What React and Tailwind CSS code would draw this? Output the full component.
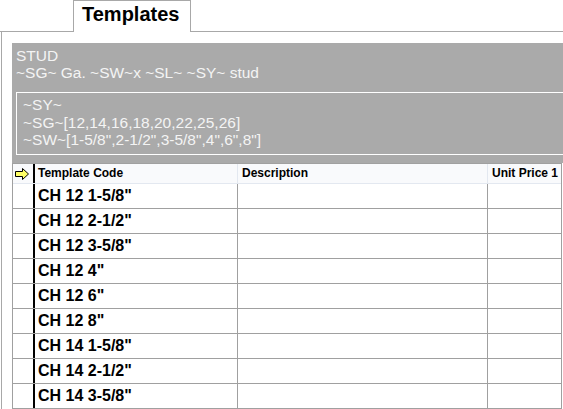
import React from 'react';

const rows = [
    'CH 12 1-5/8"',
    'CH 12 2-1/2"',
    'CH 12 3-5/8"',
    'CH 12 4"',
    'CH 12 6"',
    'CH 12 8"',
    'CH 14 1-5/8"',
    'CH 14 2-1/2"',
    'CH 14 3-5/8"',
];

// Yellow "current row" arrow in the header selector cell
const RowArrow = () => (
    <svg width="14" height="12" viewBox="0 0 14 12">
        <polygon
            points="0.5,3.5 7.5,3.5 7.5,0.5 13.5,6 7.5,11.5 7.5,8.5 0.5,8.5"
            fill="#ffff66"
            stroke="#000"
            strokeWidth="1"
        />
    </svg>
);

const App = () => {
    return (
        <div className="w-[563px] h-[409px] overflow-hidden bg-white font-['Liberation_Sans',Arial,sans-serif]">
            {/* Tab strip */}
            <div className="flex h-[32px]">
                <div className="w-[73px] border-b border-[#a8a8a8]" />
                <div className="w-[118px] h-[32px] border-t border-l border-r border-[#a8a8a8] pl-[8px] pt-[2px] text-[20px] leading-[23px] font-bold text-black">
                    Templates
                </div>
                <div className="flex-1 border-b border-[#a8a8a8]" />
            </div>

            {/* Panel */}
            <div className="ml-[1px] border-l border-[#a8a8a8] pt-[11px] pl-[10px] h-[377px]">
                {/* Template header box */}
                <div className="h-[120px] bg-[#aaaaaa] pt-[4px] pl-[4px] text-[15.5px] leading-[17px] text-[#f4f4f4]">
                    <div>STUD</div>
                    <div>~SG~ Ga. ~SW~x ~SL~ ~SY~ stud</div>
                    <div className="mt-[11px] h-[63px] border-l border-t border-b border-white pl-[6px] pt-[3px] leading-[17.5px]">
                        <div>~SY~</div>
                        <div>~SG~[12,14,16,18,20,22,25,26]</div>
                        <div>~SW~[1-5/8",2-1/2",3-5/8",4",6",8"]</div>
                    </div>
                </div>

                {/* Grid */}
                <div className="w-[550px] border-t border-l border-r border-[#a0a0a0]">
                    <div className="flex h-[20px] bg-[#f9fafc] border-b border-[#e3e8f0] text-[12px] leading-[19px] font-bold text-black">
                        <div className="w-[22px] border-r-2 border-black flex items-center justify-center pr-[2px]">
                            <RowArrow />
                        </div>
                        <div className="w-[203px] border-r border-[#e3e8f0] pl-[3px]">Template Code</div>
                        <div className="w-[250px] border-r border-[#e3e8f0] pl-[4px]">Description</div>
                        <div className="w-[73px] pl-[4px]">Unit Price 1</div>
                    </div>

                    {rows.map((code) => (
                        <div key={code} className="flex h-[25px] border-b border-[#a0a0a0]">
                            <div className="w-[22px] border-r-2 border-black" />
                            <div className="w-[203px] border-r border-[#a0a0a0] pl-[3px] text-[16px] leading-[24px] font-bold text-black">
                                {code}
                            </div>
                            <div className="w-[250px] border-r border-[#a0a0a0]" />
                            <div className="w-[73px]" />
                        </div>
                    ))}
                </div>
            </div>
        </div>
    );
};

export default App;
